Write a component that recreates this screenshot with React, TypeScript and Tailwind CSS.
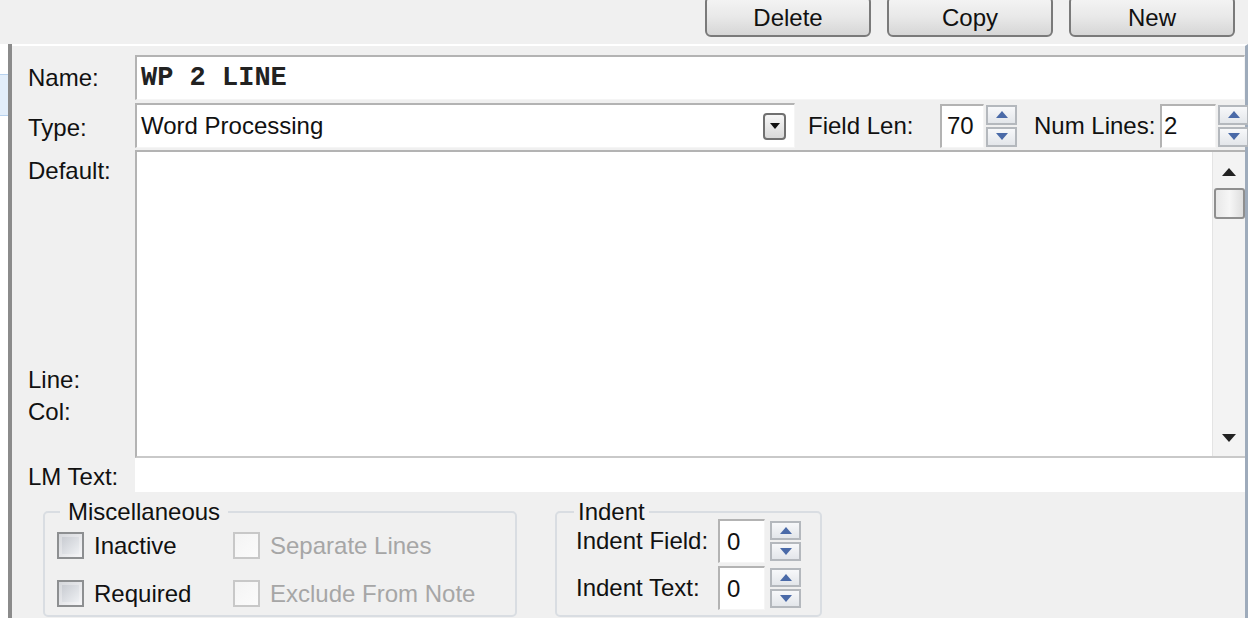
import React from 'react'

function Spin({ h = 20 }: { h?: number }) {
  const btn =
    'flex items-center justify-center w-[31px] border-2 border-[#b4b8bd] bg-gradient-to-b from-[#f7f8fa] to-[#e3e6ea]'
  return (
    <div className="flex flex-col gap-[2px]">
      <div className={btn} style={{ height: h }}>
        <svg width="12" height="7" viewBox="0 0 12 7">
          <path d="M6 0 L12 7 L0 7 Z" fill="#4a6aa8" />
        </svg>
      </div>
      <div className={btn} style={{ height: h }}>
        <svg width="12" height="7" viewBox="0 0 12 7">
          <path d="M0 0 L12 0 L6 7 Z" fill="#4a6aa8" />
        </svg>
      </div>
    </div>
  )
}

function Box({ className, children }: { className?: string; children?: React.ReactNode }) {
  return (
    <div
      className={
        'bg-white border-t-2 border-l-2 border-[#b3b3b3] border-r border-b border-r-[#f5f5f5] border-b-[#f5f5f5] flex items-center ' +
        (className ?? '')
      }
    >
      {children}
    </div>
  )
}

function Check({ label, disabled }: { label: string; disabled?: boolean }) {
  return (
    <div className="flex items-center gap-[10px] h-[27px]">
      <div
        className={
          'w-[27px] h-[27px] border-2 ' +
          (disabled
            ? 'border-[#c8c8c8] bg-gradient-to-br from-[#f4f4f4] to-[#fbfbfb]'
            : 'border-[#8d8f91] bg-gradient-to-br from-[#d6d8dc] to-[#f6f6f8] p-[3px]')
        }
      >
        {!disabled && <div className="w-full h-full bg-gradient-to-br from-[#c9ccd2] to-[#eef0f3]" />}
      </div>
      <span className={disabled ? 'text-[#a6a6a6]' : 'text-[#111]'}>{label}</span>
    </div>
  )
}

function Btn({ label }: { label: string }) {
  return (
    <div className="w-[166px] h-[41px] -mt-[4px] rounded-[6px] border-2 border-[#7a7a7a] bg-gradient-to-b from-[#f4f4f4] via-[#e9e9e9] to-[#d6d6d6] flex items-center justify-center pt-[3px] text-[#111]">
      {label}
    </div>
  )
}

export default function App() {
  return (
    <div className="w-[1248px] h-[618px] overflow-hidden bg-[#f0f0f0] text-[24px] text-[#111] font-['Liberation_Sans',Arial,sans-serif] flex flex-col">
      <div className="h-[44px] shrink-0 flex justify-end items-start gap-[16px] pr-[13px]">
        <Btn label="Delete" />
        <Btn label="Copy" />
        <Btn label="New" />
      </div>

      <div className="flex flex-1 min-h-0">
        <div className="w-[8px] shrink-0 flex flex-col bg-white">
          <div className="h-[30px] bg-white" />
          <div className="h-[42px] bg-[#e3eefa] border-y border-[#b8d2ee]" />
          <div className="flex-1 bg-white" />
        </div>
        <div className="w-[4px] shrink-0 bg-[#8b8b8b]" />

        <div className="flex-1 min-w-0 border-t-2 border-white border-r-[3px] border-r-[#9eabbb] pl-[16px] pt-[9px] flex flex-col">
          <div className="flex h-[45px]">
            <div className="w-[107px] shrink-0 flex items-center">Name:</div>
            <Box className="flex-1 pl-[4px]">
              <span className="font-['Liberation_Mono',monospace] font-bold text-[27px] text-[#222]">WP 2 LINE</span>
            </Box>
          </div>

          <div className="flex h-[45px] mt-[3px] items-center">
            <div className="w-[107px] shrink-0 flex items-center pt-[4px]">Type:</div>
            <Box className="w-[660px] shrink-0 h-[45px] pl-[4px] justify-between pr-[8px]">
              <span>Word Processing</span>
              <div className="w-[23px] h-[27px] rounded-[4px] border-2 border-[#707070] bg-gradient-to-b from-[#f6f6f6] to-[#d9d9d9] flex items-center justify-center">
                <svg width="10" height="6" viewBox="0 0 10 6">
                  <path d="M0 0 L10 0 L5 6 Z" fill="#111" />
                </svg>
              </div>
            </Box>
            <div className="w-[145px] shrink-0 pl-[13px]">Field Len:</div>
            <Box className="w-[44px] shrink-0 h-[44px] pl-[5px]">70</Box>
            <div className="ml-[2px] shrink-0">
              <Spin />
            </div>
            <div className="pl-[17px] w-[143px] shrink-0">Num Lines:</div>
            <Box className="w-[56px] shrink-0 h-[44px] pl-[2px]">2</Box>
            <div className="ml-[2px] shrink-0">
              <Spin />
            </div>
          </div>

          <div className="flex h-[308px] mt-[2px]">
            <div className="w-[107px] shrink-0 flex flex-col leading-[32px] pt-[5px] pb-[30px]">
              <div>Default:</div>
              <div className="mt-auto">Line:</div>
              <div>Col:</div>
            </div>
            <div className="flex-1 bg-white border-t-2 border-l-2 border-b-2 border-[#b3b3b3] border-b-[#c9c9c9] flex">
              <div className="flex-1" />
              <div className="w-[33px] bg-[#f3f3f3] border-l border-[#e4e4e4] flex flex-col items-center">
                <svg className="mt-[16px]" width="14" height="8" viewBox="0 0 14 8">
                  <path d="M7 0 L14 8 L0 8 Z" fill="#222" />
                </svg>
                <div className="mt-[12px] w-[31px] h-[31px] rounded-[3px] border-2 border-[#8f8f8f] bg-gradient-to-r from-[#e8e8e8] via-[#f6f6f6] to-[#dedede]" />
                <div className="flex-1" />
                <svg className="mb-[14px]" width="14" height="8" viewBox="0 0 14 8">
                  <path d="M0 0 L14 0 L7 8 Z" fill="#222" />
                </svg>
              </div>
            </div>
          </div>

          <div className="flex h-[34px]">
            <div className="w-[107px] shrink-0 flex items-center pt-[4px]">LM Text:</div>
            <div className="flex-1 bg-white" />
          </div>

          <div className="flex mt-[7px] gap-[38px] pl-[15px]">
            <fieldset className="w-[474px] h-[118px] border-2 border-[#d9dde2] rounded-[5px] px-[12px] flex flex-col">
              <legend className="px-[8px] ml-[3px] leading-[26px]">Miscellaneous</legend>
              <div className="flex mt-[7px]">
                <div className="w-[176px]"><Check label="Inactive" /></div>
                <Check label="Separate Lines" disabled />
              </div>
              <div className="flex mt-[21px]">
                <div className="w-[176px]"><Check label="Required" /></div>
                <Check label="Exclude From Note" disabled />
              </div>
            </fieldset>

            <fieldset className="w-[267px] h-[118px] border-2 border-[#d9dde2] rounded-[5px] pl-[19px] flex flex-col">
              <legend className="px-[4px] -ml-[2px] leading-[26px]">Indent</legend>
              <div className="flex items-center -mt-[6px]">
                <div className="w-[142px]">Indent Field:</div>
                <Box className="w-[47px] h-[44px] pl-[7px]">0</Box>
                <div className="ml-[5px]">
                  <Spin h={19} />
                </div>
              </div>
              <div className="flex items-center mt-[3px]">
                <div className="w-[142px]">Indent Text:</div>
                <Box className="w-[47px] h-[44px] pl-[7px]">0</Box>
                <div className="ml-[5px]">
                  <Spin h={19} />
                </div>
              </div>
            </fieldset>
          </div>
        </div>
      </div>
    </div>
  )
}
